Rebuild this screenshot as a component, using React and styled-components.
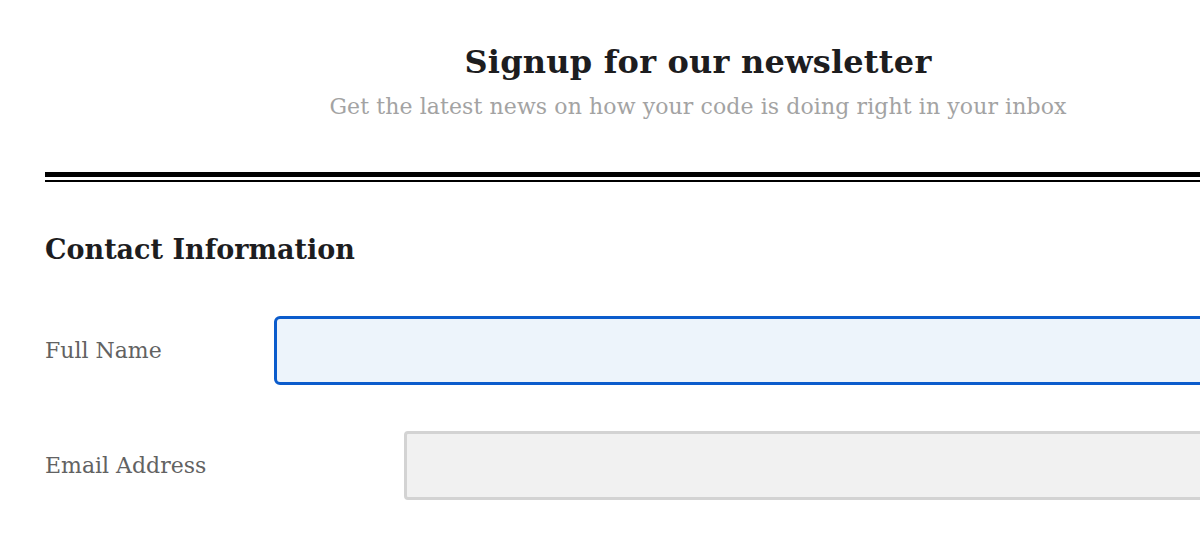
import React from 'react'
import styled, { createGlobalStyle } from 'styled-components'

const GlobalStyle = createGlobalStyle`
  html, body {
    margin: 0;
    padding: 0;
    background: #ffffff;
    overflow: hidden;
  }
  body {
    font-family: "DejaVu Serif", "Liberation Serif", serif;
  }
`

const Page = styled.div`
  width: 1306px;
  margin-left: 45px;
  padding-top: 38px;
`

const Header = styled.header`
  display: flex;
  flex-direction: column;
  align-items: center;
  padding-bottom: 52px;
`

const Title = styled.h1`
  margin: 0;
  font-size: 32px;
  line-height: 48px;
  font-weight: 700;
  color: #1d1d1f;
  letter-spacing: 0.2px;
`

const Subtitle = styled.p`
  margin: 8px 0 0;
  font-size: 22px;
  line-height: 26px;
  color: #a3a3a3;
  letter-spacing: 0.1px;
`

const DoubleRule = styled.div`
  height: 3px;
  border-top: 5px solid #000;
  border-bottom: 2px solid #000;
`

const Section = styled.section`
  padding-top: 50px;
`

const SectionTitle = styled.h2`
  margin: 0 0 48px;
  font-size: 27px;
  line-height: 36px;
  font-weight: 700;
  color: #1d1d1f;
`

const Row = styled.div`
  display: flex;
  align-items: center;
  margin-bottom: 46px;
`

const Label = styled.label`
  width: ${p => p.$width}px;
  flex-shrink: 0;
  font-size: 22px;
  color: #626262;
`

const Input = styled.input`
  flex: 1;
  box-sizing: border-box;
  height: 69px;
  border-radius: ${p => (p.$focused ? 6 : 4)}px;
  border: 3px solid ${p => (p.$focused ? '#0b5ccc' : '#d3d3d3')};
  background: ${p => (p.$focused ? '#edf4fb' : '#f1f1f1')};
  outline: none;
  font-family: inherit;
  font-size: 20px;
  padding: 0 16px;
`

export default function App() {
  return (
    <>
      <GlobalStyle />
      <Page>
        <Header>
          <Title>Signup for our newsletter</Title>
          <Subtitle>Get the latest news on how your code is doing right in your inbox</Subtitle>
        </Header>
        <DoubleRule />
        <Section>
          <SectionTitle>Contact Information</SectionTitle>
          <Row>
            <Label $width={229}>Full Name</Label>
            <Input $focused type="text" />
          </Row>
          <Row>
            <Label $width={359}>Email Address</Label>
            <Input type="email" />
          </Row>
        </Section>
      </Page>
    </>
  )
}
